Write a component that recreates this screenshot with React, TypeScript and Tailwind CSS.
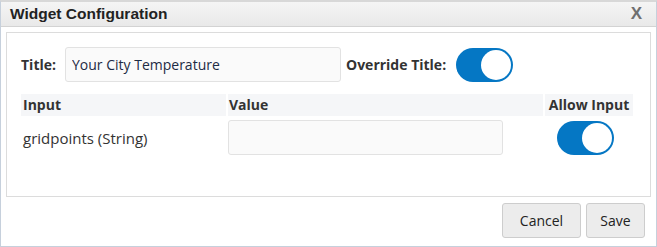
import { useState } from 'react'

const Toggle = ({ on, onClick }: { on: boolean; onClick: () => void }) => (
  <button
    onClick={onClick}
    className={`flex items-center w-[57px] h-[34px] rounded-full p-[2px] ${on ? 'bg-[#0577c4] justify-end' : 'bg-[#c8c8c8] justify-start'}`}
  >
    <span className="block w-[30px] h-[30px] rounded-full bg-white" />
  </button>
)

const App = () => {
  const [title, setTitle] = useState<string>('Your City Temperature')
  const [value, setValue] = useState<string>('')
  const [override, setOverride] = useState<boolean>(true)
  const [allow, setAllow] = useState<boolean>(true)

  return (
    <div className="w-[657px] h-[247px] bg-white border border-[#c6d0dc] border-t-2 border-t-[#d8d8d8] flex flex-col font-['Open_Sans',sans-serif] text-[#333]">
      <div className="h-[25px] flex items-center justify-between px-[9px] bg-gradient-to-b from-[#f5f5f5] to-[#e9e9e9] border-b border-[#d3d3d3]">
        <span className="font-['Liberation_Sans',Arial,sans-serif] font-bold text-[15.5px] text-[#222]">Widget Configuration</span>
        <span className="font-['Liberation_Sans',Arial,sans-serif] font-bold text-[17px] text-[#6f6f6f] mr-[5px]">X</span>
      </div>

      <div className="mx-[5px] mt-[5px] h-[165px] border border-[#dcdcdc] pl-[14px] pr-[17px] pt-[14px]">
        <div className="flex items-center">
          <span className="font-bold text-[14px] w-[44px]">Title:</span>
          <input
            value={title}
            onChange={(e) => setTitle(e.target.value)}
            className="w-[276px] h-[35px] px-[6px] bg-[#fafafa] border border-[#e2e2e2] rounded-[3px] text-[14px] text-[#1d2b44] outline-none"
          />
          <span className="font-bold text-[14px] ml-[5px] w-[110px]">Override Title:</span>
          <Toggle on={override} onClick={() => setOverride(!override)} />
        </div>

        <div className="mt-[12px] grid grid-cols-[205px_315px_88px] gap-x-[2px] text-[14px]">
          <div className="h-[22px] bg-[#f5f6f8] px-[2px] font-bold leading-[22px]">Input</div>
          <div className="h-[22px] bg-[#f5f6f8] px-[1px] font-bold leading-[22px]">Value</div>
          <div className="h-[22px] bg-[#f5f6f8] font-bold leading-[22px] text-center">Allow Input</div>

          <div className="h-[40px] flex items-center px-[2px] pt-[4px] text-[15px]">gridpoints (String)</div>
          <div className="h-[40px] flex items-center pt-[3px]">
            <input
              value={value}
              onChange={(e) => setValue(e.target.value)}
              className="w-[275px] h-[35px] px-[6px] bg-[#fafafa] border border-[#e2e2e2] rounded-[3px] text-[14px] outline-none"
            />
          </div>
          <div className="h-[40px] flex items-center justify-center pt-[3px] pr-[7px]">
            <Toggle on={allow} onClick={() => setAllow(!allow)} />
          </div>
        </div>
      </div>

      <div className="flex justify-end gap-[5px] pr-[11px] mt-[6px]">
        <button className="w-[79px] h-[35px] bg-[#ececec] border border-[#cdcdcd] rounded-[3px] text-[14px] text-[#222]">Cancel</button>
        <button className="w-[59px] h-[35px] bg-[#ececec] border border-[#cdcdcd] rounded-[3px] text-[14px] text-[#222]">Save</button>
      </div>
    </div>
  )
}

export default App
